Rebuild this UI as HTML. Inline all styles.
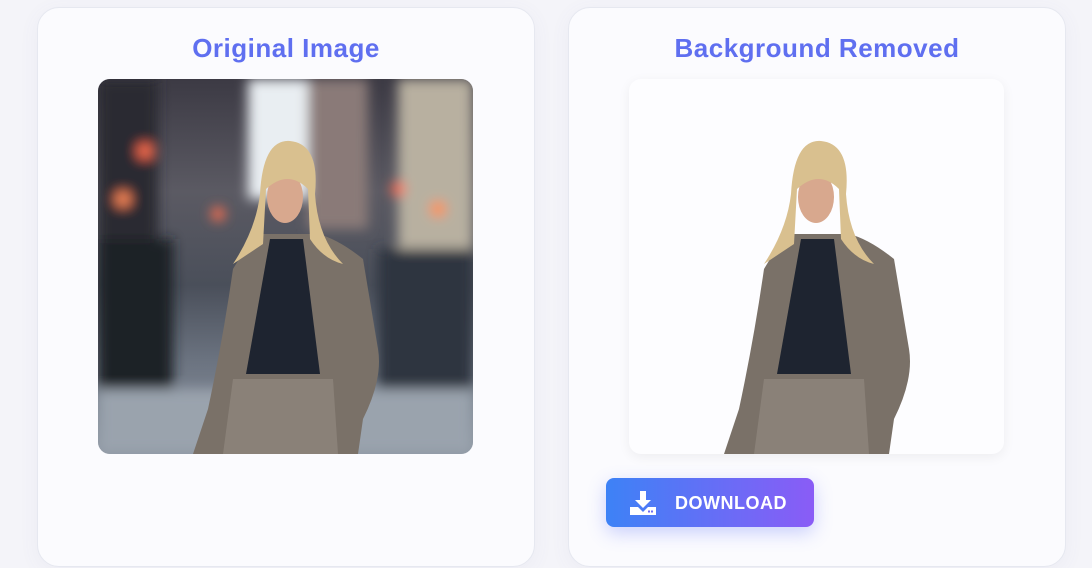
<!DOCTYPE html>
<html><head><style>
*{box-sizing:border-box}
body{margin:0;width:1092px;height:568px;background:#f4f4f9;font-family:"Liberation Sans",sans-serif;overflow:hidden;position:relative}
.card{position:absolute;top:7px;width:498px;height:560px;background:#fbfbfe;border:1px solid #e6e8f0;border-radius:22px;box-shadow:0 4px 20px rgba(100,100,160,.06)}
h2{position:absolute;top:25px;left:0;right:0;margin:0;text-align:center;font-size:26px;font-weight:bold;color:#5f6ff0;letter-spacing:.5px}
.img{position:absolute;top:71px;left:60px;width:375px;height:375px;border-radius:12px;overflow:hidden}
.btn{position:absolute;left:37px;top:470px;width:208px;height:49px;border-radius:8px;background:linear-gradient(90deg,#3d82f6,#8a5cf6);box-shadow:0 6px 18px rgba(90,110,250,.3);color:#fff;font-weight:bold;font-size:18px}
</style></head><body>
<div class="card" style="left:37px">
<h2>Original Image</h2>
<div class="img" style="background:linear-gradient(180deg,#3c3a44 0%,#5b5a63 30%,#4a4f5a 55%,#6b7380 75%,#8d96a2 100%)">
<svg width="375" height="375" viewBox="0 0 375 375">
<defs><filter id="b"><feGaussianBlur stdDeviation="6"/></filter></defs>
<g filter="url(#b)">
<rect x="0" y="0" width="60" height="160" fill="#2a2a32"/>
<rect x="150" y="0" width="60" height="120" fill="#e9eef2"/>
<rect x="300" y="0" width="75" height="200" fill="#b8b0a0"/>
<rect x="210" y="0" width="60" height="150" fill="#8a7a78"/>
<circle cx="25" cy="120" r="8" fill="#ff8a5a"/><circle cx="47" cy="72" r="8" fill="#ff7050"/>
<circle cx="120" cy="135" r="7" fill="#ff7050"/><circle cx="340" cy="130" r="8" fill="#ff9050"/>
<circle cx="300" cy="110" r="7" fill="#ff6a50"/>
<rect x="0" y="160" width="75" height="215" fill="#1e2228"/>
<rect x="280" y="170" width="95" height="200" fill="#2e3440"/>
<rect x="0" y="310" width="375" height="65" fill="#9aa3ad"/>
</g>
<path d="M150 165 L135 190 Q125 260 110 330 L95 375 L260 375 L265 340 Q285 300 280 270 L265 180 Q240 160 220 155 L160 155Z" fill="#7a7168"/>
<path d="M172 160 L205 160 L222 295 L148 295Z" fill="#1e2430"/>
<path d="M135 300 L235 300 L240 375 L125 375Z" fill="#8a8178"/>
<ellipse cx="187" cy="118" rx="18" ry="26" fill="#d8a88e"/>
<path d="M162 115 Q165 60 192 62 Q222 65 217 115 Q220 160 245 185 Q225 180 212 160 L210 110 Q190 90 168 110 L165 165 Q150 175 135 185 Q158 150 162 115Z" fill="#d9c08f"/>
</svg></div>
</div>
<div class="card" style="left:568px">
<h2>Background Removed</h2>
<div class="img" style="background:#fdfdff;box-shadow:0 3px 12px rgba(0,0,0,.06)">
<svg width="375" height="375" viewBox="0 0 375 375">
<path d="M150 165 L135 190 Q125 260 110 330 L95 375 L260 375 L265 340 Q285 300 280 270 L265 180 Q240 160 220 155 L160 155Z" fill="#7a7168"/>
<path d="M172 160 L205 160 L222 295 L148 295Z" fill="#1e2430"/>
<path d="M135 300 L235 300 L240 375 L125 375Z" fill="#8a8178"/>
<ellipse cx="187" cy="118" rx="18" ry="26" fill="#d8a88e"/>
<path d="M162 115 Q165 60 192 62 Q222 65 217 115 Q220 160 245 185 Q225 180 212 160 L210 110 Q190 90 168 110 L165 165 Q150 175 135 185 Q158 150 162 115Z" fill="#d9c08f"/>
</svg></div>
<div class="btn">
<svg style="position:absolute;left:24px;top:12px" width="26" height="26" viewBox="0 0 26 26" fill="#fff"><path d="M10 1h6v9h5l-8 8-8-8h5z"/><path d="M0 17h8l5 5 5-5h8v8H0z"/><rect x="18" y="20.5" width="2" height="2" fill="#6d6cf3"/><rect x="21" y="20.5" width="2" height="2" fill="#6d6cf3"/></svg>
<span style="position:absolute;left:69px;top:15px;letter-spacing:.5px">DOWNLOAD</span>
</div>
</div>
</body></html>
